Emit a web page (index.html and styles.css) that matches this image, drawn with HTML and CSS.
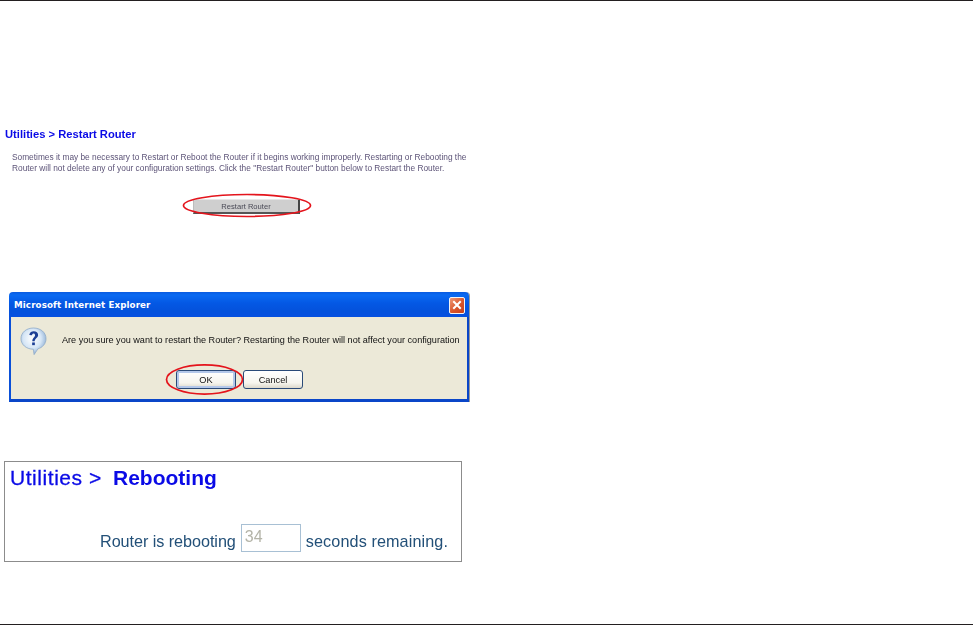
FILE: index.html
```html
<!DOCTYPE html>
<html lang="en">
<head>
<meta charset="utf-8">
<title>Restart Router</title>
<link rel="stylesheet" href="styles.css">
</head>
<body>
<div class="page">
  <section class="restart">
    <h2 class="restart-title">Utilities &gt; Restart Router</h2>
    <p class="restart-text">Sometimes it may be necessary to Restart or Reboot the Router if it begins working improperly. Restarting or Rebooting the<br>Router will not delete any of your configuration settings. Click the "Restart Router" button below to Restart the Router.</p>
    <div class="restart-action">
      <div class="marked">
        <div class="restart-btn">Restart Router</div>
        <svg class="oval oval-restart" viewBox="0 0 130 25"><ellipse cx="65" cy="12.5" rx="63.5" ry="11" /></svg>
      </div>
    </div>
  </section>

  <section class="dialog">
    <div class="dialog-title">
      <span class="dialog-name">Microsoft Internet Explorer</span>
      <span class="dialog-close">
        <svg viewBox="0 0 15 15" class="close-x"><path d="M3.5 3.5 L11.5 11.5 M11.5 3.5 L3.5 11.5"/></svg>
      </span>
    </div>
    <div class="dialog-body">
      <div class="dialog-message">
        <svg class="help-icon" viewBox="0 0 28 30">
          <defs>
            <radialGradient id="bub" cx="45%" cy="40%" r="65%">
              <stop offset="0" stop-color="#ffffff"/>
              <stop offset="0.55" stop-color="#d6e6f6"/>
              <stop offset="1" stop-color="#7fa3cc"/>
            </radialGradient>
          </defs>
          <path d="M14 1 C21.5 1 27 5.8 27 12 C27 17.6 23 21.4 18.6 22.6 L14.6 28.6 L13.8 23 C6.5 23 1 18.2 1 12 C1 5.8 6.5 1 14 1 Z" fill="url(#bub)" stroke="#8fabc9" stroke-width="0.8"/>
          <path d="M9.6 8.2 C10 5.4 12.2 4.4 14.2 4.4 C17 4.4 18.8 6 18.8 8.2 C18.8 11 15.4 11.6 15.2 14.8 L12.8 14.8 C12.6 11 15.6 10.6 15.6 8.4 C15.6 7.2 15 6.6 14 6.6 C13 6.6 12.6 7.4 12.4 8.6 Z" fill="#1c3f95"/>
          <rect x="12.6" y="16" width="2.8" height="2.8" fill="#1c3f95"/>
        </svg>
        <span class="dialog-text">Are you sure you want to restart the Router? Restarting the Router will not affect your configuration</span>
      </div>
      <div class="dialog-actions">
        <div class="marked">
          <div class="xp-btn xp-btn-default">OK</div>
          <svg class="oval oval-ok" viewBox="0 0 79 33"><ellipse cx="39.5" cy="16.5" rx="38" ry="14.6" /></svg>
        </div>
        <div class="xp-btn">Cancel</div>
      </div>
    </div>
  </section>

  <section class="reboot">
    <h2 class="reboot-title"><span class="reboot-crumb">Utilities &gt;</span><span class="reboot-strong">Rebooting</span></h2>
    <div class="reboot-line">
      <span class="reboot-label reboot-label-tight">Router is rebooting</span>
      <span class="count">34</span>
      <span class="reboot-label">seconds remaining.</span>
    </div>
  </section>
</div>
</body>
</html>
```
FILE: styles.css
```css
* { box-sizing: border-box; }
html, body { margin: 0; padding: 0; background: #fff; }
body { width: 973px; height: 625px; overflow: hidden; }

.page {
  height: 625px;
  border-top: 1px solid #231f20;
  border-bottom: 1px solid #231f20;
  font-family: "Liberation Sans", Arial, sans-serif;
  display: flex;
  flex-direction: column;
  align-items: flex-start;
}

/* first capture */
.restart { width: 473px; height: 164px; flex: none; margin-top: 127px; padding-left: 5px; filter: blur(0.3px); }
.restart-title {
  margin: 0;
  font-size: 11.2px;
  line-height: 13px;
  font-weight: 700;
  color: #0a0ae6;
}
.restart-text {
  margin: 11px 0 0 7px;
  font-size: 8.34px;
  line-height: 11px;
  color: #5d5478;
  white-space: nowrap;
}
.restart-action { margin: 25px 0 0 188px; display: flex; }
.marked { position: relative; display: flex; }
.restart-btn {
  width: 107px;
  height: 15px;
  background: #cfcfcf;
  border-top: 1px solid #e6e6e6;
  border-left: 1px solid #bdbdbd;
  border-right: 2px solid #444;
  border-bottom: 2px solid #555;
  color: #4a4a56;
  font-size: 7.6px;
  line-height: 13px;
  text-align: center;
}
.oval { position: absolute; fill: none; stroke: #e4141c; stroke-width: 1.7; overflow: visible; }
.oval-restart { left: -11px; top: -6px; width: 130px; height: 25px; }

/* dialog */
.dialog {
  width: 460px;
  height: 110px;
  flex: none;
  margin: 0 0 0 9px;
  display: flex;
  flex-direction: column;
  border-radius: 4px 4px 0 0;
  overflow: hidden;
  box-shadow: 1px 0 0 #9a9a9a;
  filter: blur(0.25px);
}
.dialog-title {
  height: 25px;
  flex: none;
  display: flex;
  align-items: center;
  justify-content: space-between;
  padding: 1px 4px 0 5px;
  background: linear-gradient(#0a5be0 0, #0a6af2 12%, #0458e4 45%, #0452dc 75%, #0650e0 100%);
}
.dialog-name {
  color: #fff;
  font-family: "DejaVu Sans", sans-serif;
  font-size: 8.7px;
  font-weight: 700;
  letter-spacing: 0.12px;
  white-space: nowrap;
}
.dialog-close {
  width: 16px;
  height: 17px;
  border: 1px solid #f4f4f4;
  border-radius: 2px;
  background: linear-gradient(135deg, #ee9a78, #d9542a 55%, #c8401c);
  display: flex;
  align-items: center;
  justify-content: center;
}
.close-x { width: 14px; height: 14px; fill: none; stroke: #fff; stroke-width: 2.2; }
.dialog-body {
  flex: 1;
  background: #ece9d8;
  border-left: 2px solid #0a50d8;
  border-right: 2px solid #0a46c8;
  border-bottom: 3px solid #0a46c8;
  display: flex;
  flex-direction: column;
}
.dialog-message { display: flex; align-items: flex-start; padding: 10px 0 0 9px; height: 53px; }
.help-icon { width: 27px; height: 29px; flex: none; }
.dialog-text {
  margin: 7px 0 0 15px;
  font-family: "Liberation Sans", sans-serif;
  font-size: 9.1px;
  line-height: 12px;
  color: #111;
  white-space: nowrap;
}
.dialog-actions { display: flex; gap: 7px; padding-left: 165px; }
.xp-btn {
  width: 60px;
  height: 19px;
  border: 1px solid #2a4a78;
  border-radius: 3px;
  background: linear-gradient(#ffffff, #f6f5ee 70%, #dcd8cb);
  font-family: "Liberation Sans", sans-serif;
  font-size: 9.2px;
  line-height: 18px;
  text-align: center;
  color: #111;
}
.xp-btn-default {
  box-shadow: inset 0 0 0 2px #b4c8ea;
}
.oval-ok { left: -11px; top: -7px; width: 79px; height: 33px; }

/* third capture */
.reboot {
  width: 458px;
  height: 101px;
  flex: none;
  margin: 59px 0 0 4px;
  border: 1px solid #8c8c8c;
  padding: 3px 13px 0 5px;
  display: flex;
  flex-direction: column;
  filter: blur(0.3px);
}
.reboot-title {
  margin: 0;
  font-size: 21px;
  line-height: 26px;
  font-weight: 400;
  color: #0a0ae6;
  white-space: nowrap;
  display: flex;
}
.reboot-crumb { width: 103px; letter-spacing: 0.55px; -webkit-text-stroke: 0.3px #0a0ae6; }
.reboot-strong { font-weight: 700; }
.reboot-line {
  margin-top: 33px;
  display: flex;
  align-items: center;
  justify-content: flex-end;
  gap: 5px;
  font-size: 16.2px;
  color: #235078;
  white-space: nowrap;
}
.reboot-label { padding-top: 6px; letter-spacing: 0.1px; }
.reboot-label-tight { letter-spacing: -0.05px; }
.count {
  width: 60px;
  height: 28px;
  border: 1px solid #a8c0d4;
  padding-left: 3px;
  font-size: 16px;
  line-height: 24px;
  color: #b4b4a8;
}
```
